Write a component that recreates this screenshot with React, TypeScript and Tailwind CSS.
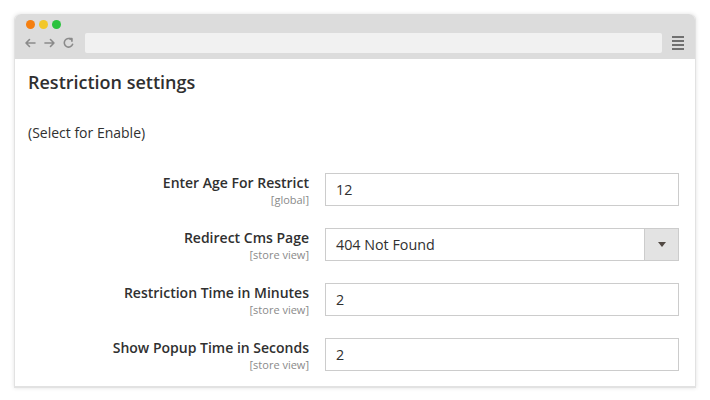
import React from "react";

const rows = [
  { label: "Enter Age For Restrict", scope: "[global]", value: "12", select: false },
  { label: "Redirect Cms Page", scope: "[store view]", value: "404 Not Found", select: true },
  { label: "Restriction Time in Minutes", scope: "[store view]", value: "2", select: false },
  { label: "Show Popup Time in Seconds", scope: "[store view]", value: "2", select: false },
];

export default function App() {
  return (
    <div className="w-[710px] h-[400px] bg-white overflow-hidden" style={{ fontFamily: '"Open Sans", "Liberation Sans", sans-serif' }}>
      <div className="ml-[14px] mt-[14px] w-[682px] h-[374px] bg-white rounded-t-[6px] border-b-2 border-r border-l border-[#e2e2e2] shadow-[0_0_4px_rgba(0,0,0,0.12)] flex flex-col">
        <div className="h-[45px] bg-[#dcdcdc] rounded-t-[6px] flex flex-col px-[11px] pt-[6px]">
          <div className="flex gap-[4px] pl-[0px]">
            <span className="w-[9px] h-[9px] rounded-full bg-[#f57f10]" />
            <span className="w-[9px] h-[9px] rounded-full bg-[#f2c72a]" />
            <span className="w-[9px] h-[9px] rounded-full bg-[#2bc23e]" />
          </div>
          <div className="flex items-center mt-[4px]">
            <svg width="60" height="14" viewBox="0 0 60 14" className="-ml-[2px]">
              <g stroke="#8a8a8a" strokeWidth="1.6" fill="none" strokeLinecap="round" strokeLinejoin="round">
                <path d="M2 7h9M5.5 3.5L2 7l3.5 3.5" />
                <path d="M21 7h9M26.5 3.5L30 7l-3.5 3.5" />
                <path d="M47.5 3.6A4.3 4.3 0 1 0 48.7 8.3" />
                <path d="M45.5 2.6h2.5v2.6" />
              </g>
            </svg>
            <div className="ml-[1px] h-[20px] w-[578px] bg-[#f1f1f1] rounded-[2px]" />
            <div className="ml-[10px] flex flex-col gap-[2px]">
              <span className="block w-[12px] h-[2px] bg-[#707070]" />
              <span className="block w-[12px] h-[2px] bg-[#707070]" />
              <span className="block w-[12px] h-[2px] bg-[#707070]" />
              <span className="block w-[12px] h-[2px] bg-[#707070]" />
            </div>
          </div>
        </div>
        <div className="pl-[13px] pr-[16px] pt-[11px]">
          <h2 className="text-[18px] leading-[24px] font-semibold text-[#303030]">Restriction settings</h2>
          <p className="mt-[29px] text-[14px] leading-[20px] text-[#303030]">(Select for Enable)</p>
          <div className="mt-[30px] flex flex-col gap-[22px]">
            {rows.map((r) => (
              <div key={r.label} className="flex items-start h-[33px]">
                <div className="w-[281px] h-[33px] flex flex-col items-end overflow-visible">
                  <span className="text-[14px] leading-[20px] font-semibold text-[#303030]">{r.label}</span>
                  <span className="text-[11px] leading-[15px] -mt-[1px] text-[#8a8a8a]">{r.scope}</span>
                </div>
                <div className="ml-[16px] w-[354px] h-[33px] border border-[#cccccc] flex items-center bg-white">
                  <span className="pl-[10px] text-[14.3px] text-[#303030] flex-1">{r.value}</span>
                  {r.select && (
                    <div className="w-[34px] h-full bg-[#e3e3e3] border-l border-[#cccccc] flex items-center justify-center">
                      <svg width="8" height="5" viewBox="0 0 8 5"><path d="M0 0h8L4 5z" fill="#514943" /></svg>
                    </div>
                  )}
                </div>
              </div>
            ))}
          </div>
        </div>
      </div>
    </div>
  );
}
